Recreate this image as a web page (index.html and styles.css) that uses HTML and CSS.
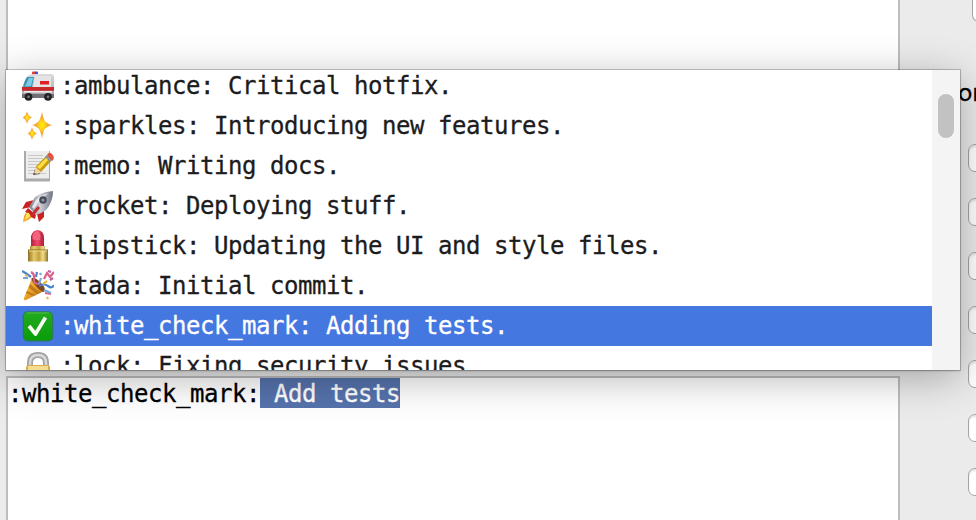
FILE: index.html
```html
<!DOCTYPE html>
<html lang="en">
<head>
<meta charset="utf-8">
<title>Commit message</title>
<link rel="stylesheet" href="styles.css">
</head>
<body>
<svg class="defs" aria-hidden="true">
  <defs>
    <linearGradient id="silver" x2="0" y2="1"><stop stop-color="#dcdcdf"/><stop offset="1" stop-color="#a0a0a5"/></linearGradient>
    <linearGradient id="gold"><stop stop-color="#8f701f"/><stop offset=".3" stop-color="#e4cb6d"/><stop offset=".55" stop-color="#c4a03a"/><stop offset=".75" stop-color="#f0df91"/><stop offset="1" stop-color="#8e7020"/></linearGradient>
    <linearGradient id="red"><stop stop-color="#b81e3c"/><stop offset=".5" stop-color="#ef4766"/><stop offset="1" stop-color="#a91f3b"/></linearGradient>
    <linearGradient id="green" x2="0" y2="1"><stop stop-color="#22ab20"/><stop offset="1" stop-color="#0a9c09"/></linearGradient>
    <radialGradient id="star"><stop stop-color="#fff200"/><stop offset=".3" stop-color="#ffd21c"/><stop offset=".6" stop-color="#f4a334"/><stop offset="1" stop-color="#f3b364"/></radialGradient>
    <linearGradient id="cone" x2="1" y2="1"><stop stop-color="#f7cf45"/><stop offset=".5" stop-color="#eaa126"/><stop offset="1" stop-color="#9c5a16"/></linearGradient>
    <linearGradient id="hull"><stop stop-color="#777a88"/><stop offset=".45" stop-color="#cfd0d8"/><stop offset="1" stop-color="#6f7280"/></linearGradient>
  </defs>
</svg>
<div class="window">
  <main class="editors">
    <div class="area area-top"></div>
    <div class="area area-message"><span>:white_check_mark:</span><span class="picked"> Add tests</span></div>
  </main>
  <aside class="side">
    <div class="field first"></div>
    <div class="side-label">or</div>
    <div class="field"></div>
    <div class="field"></div>
    <div class="field"></div>
    <div class="field"></div>
    <div class="field"></div>
    <div class="field"></div>
    <div class="field"></div>
  </aside>
</div>
<div class="popup">
  <ul class="list">
    <li class="row">
      <svg class="icon" viewBox="0 0 32 32"><path fill="#e23b3b" d="M10 2.500q0-1 1-1h2.500v4H10z"/><path fill="#3b53c9" d="M13 1.500h2q1 0 1 1v3h-3z"/><path fill="url(#silver)" d="M7 5Q8 4 12 4h17q3 0 3 3v18q0 3-2.500 3H3q-3 0-3-3v-8L2.500 12Q5 6 7 5z"/><path fill="#3f94b4" d="M5 7h7l-2 10-9 .5Q3 9 5 7z"/><path fill="#7fcbe6" d="M7 8h4l-2 8-6 .5z"/><path fill="#e4e4e6" d="M13 6h16v11H11z"/><path fill="#e21f22" d="M18 11h9v3.500h-9z"/><path fill="#c9292b" d="M0 17h32v3.800H0z"/><path fill="#ededee" d="M2 21h28v1.500H2z"/><path fill="#707076" d="M0 24h32v4H0z"/><circle cx="6.500" cy="26.800" r="3.900" fill="#222"/><circle cx="26" cy="26.800" r="3.900" fill="#222"/><circle cx="6.500" cy="26.800" r="1.400" fill="#777"/><circle cx="26" cy="26.800" r="1.400" fill="#777"/></svg>
      <span>:ambulance: Critical hotfix.</span></li>
    <li class="row">
      <svg class="icon" viewBox="0 0 32 32"><g fill="url(#star)"><path d="M20 1.500Q20.800 8 23 11.500 26 14 30 15 26 16 23 18.500 20.800 22 20 29 19 22 16.500 18.500 14 16 10 15 14 14 16.500 11.500 19 8 20 1.500z"/><path d="M5 1Q6 6 10 7.500 6 9 5 14 4 9 .5 7.500 4 6 5 1z"/><path d="M10 17Q11 22 15 23.500 11 25 10 30 9 25 5.500 23.500 9 22 10 17z"/></g></svg>
      <span>:sparkles: Introducing new features.</span></li>
    <li class="row">
      <svg class="icon" viewBox="0 0 32 32"><path fill="#aaa" d="M2 1h26v30.500H2z"/><path fill="#ededec" d="M4 1h23v27.500H4z"/><path stroke="#c8c8c8" d="M6 5.500h15M6 8.500h15M6 11.500h15M6 14.500h14M6 17.500h14M6 20.500h14M6 23.500h18"/><path fill="#444" d="m11 25 2-6 5 5z"/><path fill="#eed4a0" d="m12 23 2-6 6 5-5 2z"/><path fill="#c99a12" d="M13.500 17 25 5l5 5-11 12z"/><path fill="#ffe040" d="m15 17 11-11 2 2-10 11z"/><path fill="#8699a5" d="m23 7 2-2 5 5-2 2z"/><path fill="#e4543f" d="M25 5q2-4 5-1t1 6l-1 1z"/></svg>
      <span>:memo: Writing docs.</span></li>
    <li class="row">
      <svg class="icon" viewBox="0 0 32 32"><path fill="#f7a52c" d="m6 19 7 6-7 5-5 2 1-6z"/><path fill="#ffe35a" d="m5 22 5 3-7 5z"/><path fill="#c82222" d="M12 10 4 12l-4 7 9-2zM22 20v7l-5 5-2-8zM6 18l8 7-1 4-4-2-2-4-4-1z"/><path fill="url(#hull)" d="M31 1Q20 2 13 7L7 17l7 8q10-3 13-9 4-7 4-15z"/><path fill="#e9e9ee" d="M27 3Q18 6 14 10l-4 7 2 2Q17 9 27 3z"/><circle cx="21" cy="10" r="3.800" fill="#454955"/><circle cx="21" cy="10" r="1.600" fill="#8d94a4"/><path fill="#c92b2b" d="m16 16-7 8 1 3 8-9z"/></svg>
      <span>:rocket: Deploying stuff.</span></li>
    <li class="row">
      <svg class="icon" viewBox="0 0 32 32"><path fill="url(#red)" d="M9 6q2-6 7-6 6 1 6 8v12H9z"/><path fill="#f0657d" d="M10.500 5q2-4 5-4 4 2 2.500 9-5 1-7.500-1z"/><path fill="url(#gold)" d="M8 16h15v5H8zM6 20h20v11.500H6z"/><path stroke="#8c6d20" d="M6 20h20"/><path stroke="#f0dc8b" d="M7 21h18"/></svg>
      <span>:lipstick: Updating the UI and style files.</span></li>
    <li class="row">
      <svg class="icon" viewBox="0 0 32 32"><path fill="url(#cone)" d="m10 8 12 13L4 30q-3 1-2-2z"/><path fill="#c07a1c" d="m5 21 9 4-3 1-7-3zM8 14l10 9-3 1-8-6z"/><path fill="#7d481c" d="M10 8q3-1 9 5t3 9q-4-1-9-7t-3-7z"/><g fill="none" stroke-width="2.200"><path stroke="#4c82d2" d="M0 1l5 3 4 3M17 16q5-3 9 0t6-1M15 2l-1 5"/><path stroke="#dc6089" d="M9 2q4 2 3 7t5 5M22 9l3-6 3 4 4-5M23 23l6 1"/><path stroke="#76a6e0" d="M1 8h5M19 8l-2 6M22 20l7 3M18 3l1 2"/><path stroke="#e8b945" d="M3 5l3 1M21 14l4-3M25 27l1 2"/><path stroke="#bd5ba2" d="M28 10l3-2M26 1l3 1"/></g></svg>
      <span>:tada: Initial commit.</span></li>
    <li class="row selected">
      <svg class="icon" viewBox="0 0 32 32"><rect x=".800" y="1.300" width="30.400" height="30.200" rx="5" fill="#2d7a5a"/><rect x="2" y="2.200" width="28" height="28" rx="4" fill="url(#green)"/><path fill="none" stroke="#52bf49" d="M5 3h22"/><path fill="none" stroke="#f8fff5" stroke-width="3.600" stroke-linejoin="round" d="m7 16 6.500 8L23.500 7.500"/></svg>
      <span>:white_check_mark: Adding tests.</span></li>
    <li class="row">
      <svg class="icon" viewBox="0 0 32 32"><path fill="none" stroke="#a3a3a4" stroke-width="6" d="M8 18v-5q0-8 8-8t8 8v5"/><path fill="none" stroke="#d8d8d8" stroke-width="2.500" d="M8 17v-4q0-8 8-8t8 8v4"/><rect x="4" y="15" width="24" height="16" rx="3" fill="#d9ab4a"/><path fill="#f5dc93" d="M6 16h20v4H6z"/></svg>
      <span>:lock: Fixing security issues.</span></li>
  </ul>
  <div class="track"><div class="thumb"></div></div>
</div>
</body>
</html>
```
FILE: styles.css
```css
* { box-sizing: border-box; }
body {
  margin: 0;
  height: 520px;
  overflow: hidden;
  background: #ebebeb;
  font: 24px/40px "DejaVu Sans Mono", monospace;
  letter-spacing: -0.448px;
  -webkit-text-stroke: 0.3px;
}
.defs { position: absolute; width: 0; height: 0; }
.window { display: flex; height: 520px; overflow: hidden; }
.editors { width: 900px; padding-left: 6px; flex: none; }
.area { border: 2px solid #bdbdbd; background: #fff; }
.area-top { height: 370px; border-top: 0; }
.area-message {
  height: 160px;
  margin-top: 6px;
  display: flex;
  align-items: flex-start;
  line-height: 32px;
  white-space: pre;
  color: #000;
}
.picked { height: 30px; background: #5673ad; color: #fff; }
.side {
  flex: none;
  width: 100px;
  padding-left: 68px;
  display: flex;
  flex-direction: column;
}
.field {
  height: 28px;
  flex: none;
  margin-bottom: 26px;
  border: 1px solid #a4a4a4;
  border-radius: 7px;
  background: #fff;
  box-shadow: inset 0 2px 2px #e6e6e6;
}
.field.first { height: 22px; margin: 0 0 0 4px; border-top: 0; border-radius: 0 0 7px 7px; box-shadow: none; }
.side-label {
  height: 122px;
  flex: none;
  padding-top: 52px;
  margin-left: -10px;
  color: #000;
  font: 24px/38px Inter, sans-serif;
  letter-spacing: 0;
}
.popup {
  position: absolute;
  left: 6px;
  top: 70px;
  width: 954px;
  height: 300px;
  display: flex;
  overflow: hidden;
  background: #fff;
  box-shadow: 0 0 0 1px rgba(0,0,0,.2), 0 1px 2px rgba(0,0,0,.2), 0 8px 38px rgba(0,0,0,.3);
}
.list { flex: 1; list-style: none; margin: -4px 0 0; padding: 0; }
.row {
  display: flex;
  height: 40px;
  padding-left: 16px;
  gap: 6px;
  color: #1c1c1c;
  white-space: pre;
}
.selected { background: #4577e1; color: #fff; }
.icon { width: 32px; height: 32px; margin-top: 4px; flex: none; }
.track { width: 28px; padding: 24px 6px; background: #f4f4f4; }
.thumb { width: 16px; height: 44px; border-radius: 8px; background: #c2c2c2; }
```
